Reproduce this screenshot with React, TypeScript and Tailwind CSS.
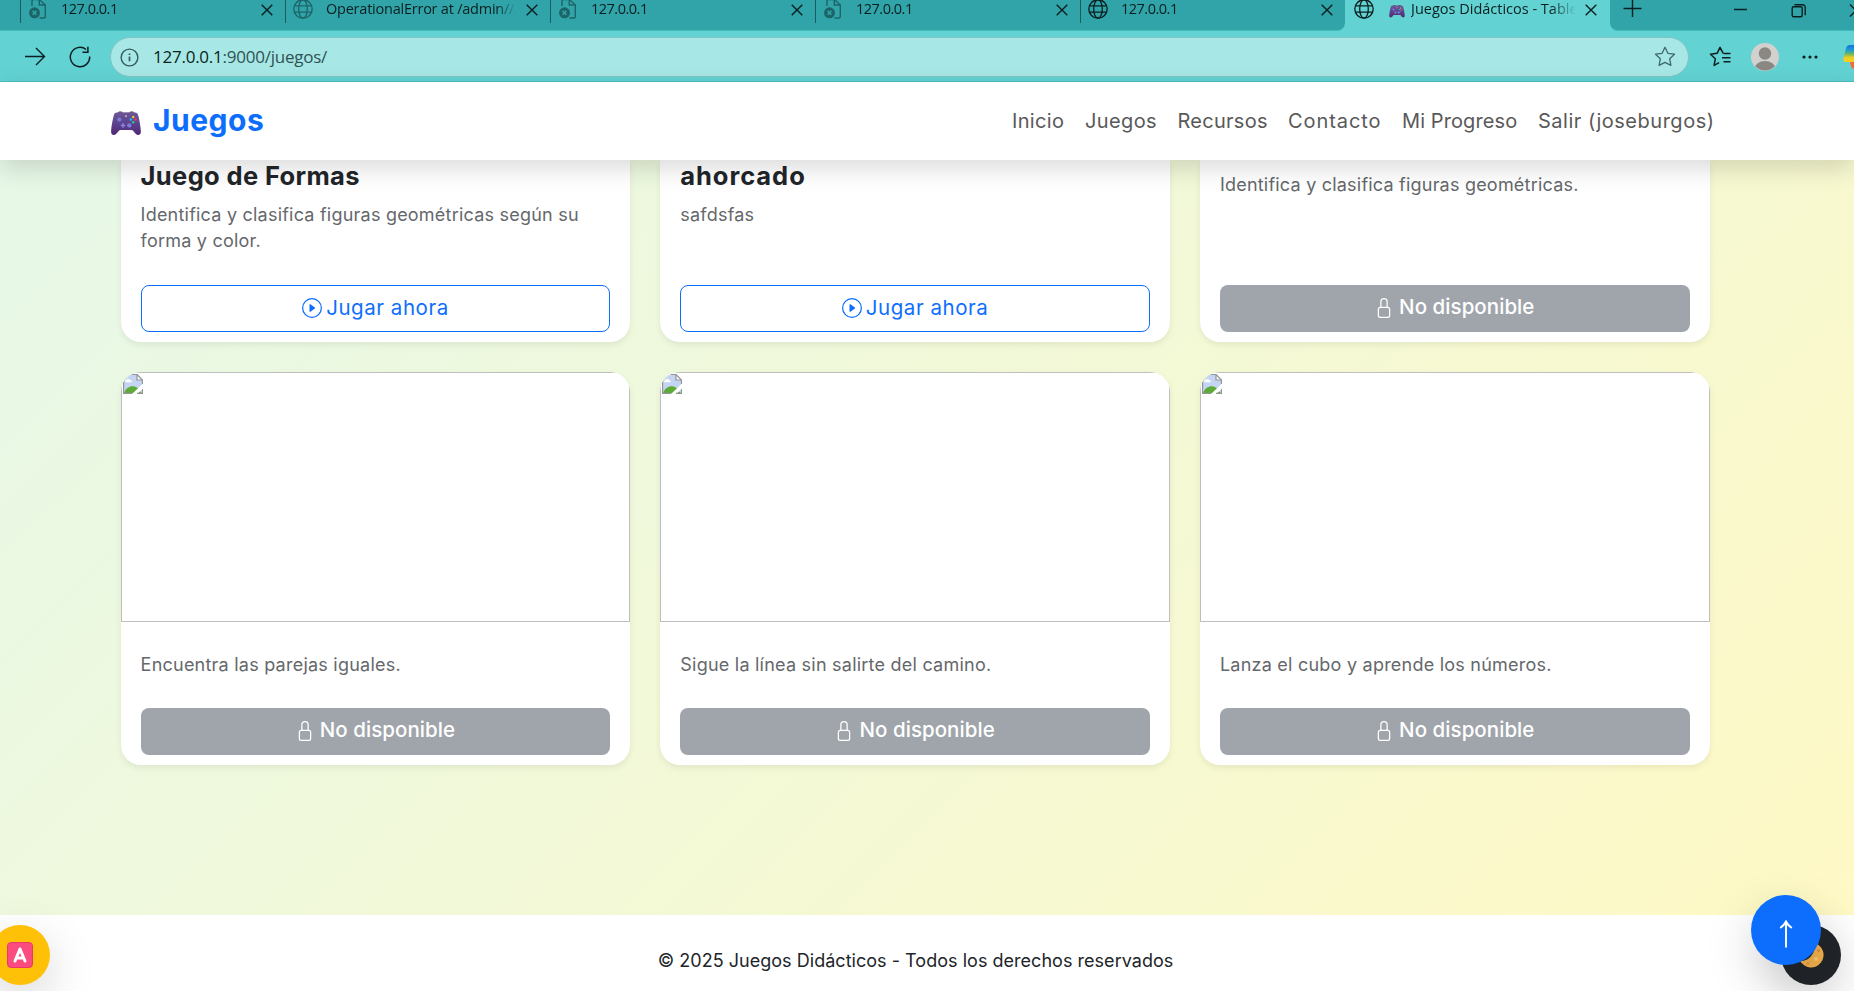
import type { ReactNode } from 'react';
import { BsLock, BsPlayCircle } from 'react-icons/bs';

function GamepadIcon({ className }: { className: string }) {
  return (
    <svg viewBox="0 0 30 25" className={className}>
      <defs>
        <linearGradient id="pad" x1="0" y1="0" x2="0" y2="1">
          <stop offset="0" stopColor="#6a5796" />
          <stop offset="0.45" stopColor="#5d4491" />
          <stop offset="1" stopColor="#512772" />
        </linearGradient>
      </defs>
      <path d="M6.5 1.8C7.2.3 11 .2 11.8 1.4h6.4C19 .2 22.8.3 23.5 1.8z" fill="#4c2a50" />
      <path
        d="M6 1.6h18c1.8 0 2.7 1 3.3 3.2 1.2 4.4 2.4 11.600 2.600 15.600.2 3.500-2.800 4.600-5 2.700-1.400-1.300-2.400-3.600-3.900-4.100H9c-1.500.500-2.500 2.800-3.900 4.100C2.900 25-.1 23.900.1 20.400.3 16.400 1.500 9.200 2.700 4.800 3.300 2.600 4.200 1.600 6 1.600z"
        fill="url(#pad)"
      />
      <circle cx="8.300" cy="8.600" r="2.100" fill="#7d7bd8" />
      <circle cx="18.300" cy="14.400" r="2.200" fill="#7d7bd8" />
      <path d="M9.700 14.400h4.600M12 12.100v4.600" stroke="#8583e0" strokeWidth="1.500" />
      <circle cx="15" cy="5.200" r="1.100" fill="#b9a6b4" />
      <circle cx="22.200" cy="6" r="1.200" fill="#f3c53c" />
      <circle cx="19.800" cy="8.500" r="1.200" fill="#27b5f0" />
      <circle cx="24.700" cy="8.500" r="1.200" fill="#f43e52" />
      <circle cx="22.200" cy="11.200" r="1.200" fill="#26d07c" />
    </svg>
  );
}

function GlobeIcon({ className }: { className: string }) {
  return (
    <svg viewBox="0 0 20 20" className={className} fill="none" stroke="currentColor" strokeWidth="1.300">
      <circle cx="10" cy="10" r="9.200" />
      <ellipse cx="10" cy="10" rx="4.300" ry="9.200" />
      <path d="M1.600 6.800h16.800M1.600 13.200h16.800" />
    </svg>
  );
}

function BrokenPageIcon() {
  return (
    <svg viewBox="0 0 20 20" className="size-5 text-[#1d6468]" fill="none" stroke="currentColor" strokeWidth="1.400">
      <path d="M4 7V2.200C4 1.200 4.600.600 5.600.600h5.800L17.300 6v11.500c0 .900-.600 1.500-1.500 1.500h-4.300" />
      <path d="M11.300.600V6h6" />
      <circle cx="6.500" cy="13.800" r="5.500" fill="currentColor" stroke="none" />
      <path d="M4.600 11.900l3.800 3.800M8.400 11.900l-3.800 3.800" stroke="#30a4a8" strokeWidth="1.500" />
    </svg>
  );
}

function CloseIcon() {
  return (
    <svg viewBox="0 0 12 12" className="size-3 shrink-0" stroke="#0b1f20" strokeWidth="1.400">
      <path d="M.7.7l10.600 10.600M11.300.7L.7 11.300" />
    </svg>
  );
}

function Tab({ icon, title, tracking }: { icon: ReactNode; title: string; tracking: string }) {
  return (
    <div className="flex h-[18px] w-[265px] shrink-0 items-center pl-[7px] pr-[13px]">
      <span className="flex w-5 shrink-0">{icon}</span>
      <span
        className={`ml-[13px] w-[190px] shrink-0 overflow-hidden text-[14.5px] whitespace-nowrap [mask-image:linear-gradient(to_right,black_170px,transparent_190px)] ${tracking}`}
      >
        {title}
      </span>
      <span className="ml-auto mt-px">
        <CloseIcon />
      </span>
    </div>
  );
}

function BrowserChrome() {
  const digits = 'tracking-[-0.5px]';
  return (
    <div className="h-[82px] border-b border-[#4dbcbd] bg-[#62d2d2] font-['Open_Sans',sans-serif] text-[#0b1f20]">
      <div className="flex h-[31px]">
        <div className="flex w-[1345px] shrink-0 rounded-br-lg border-b border-[#45b8ba] bg-[#30a4a8] pl-5">
          <div className="flex h-[23px] border-l border-[#1c5c60]">
            <Tab icon={<BrokenPageIcon />} title="127.0.0.1" tracking={digits} />
          </div>
          <div className="-ml-px flex h-[23px] border-l border-[#1c5c60]">
            <Tab icon={<GlobeIcon className="size-5 text-[#1d6468]" />} title="OperationalError at /admin//A" tracking="tracking-[-0.23px]" />
          </div>
          <div className="-ml-px flex h-[23px] border-l border-[#1c5c60]">
            <Tab icon={<BrokenPageIcon />} title="127.0.0.1" tracking={digits} />
          </div>
          <div className="-ml-px flex h-[23px] border-l border-[#1c5c60]">
            <Tab icon={<BrokenPageIcon />} title="127.0.0.1" tracking={digits} />
          </div>
          <div className="-ml-px flex h-[23px] border-l border-[#1c5c60]">
            <Tab icon={<GlobeIcon className="size-5" />} title="127.0.0.1" tracking={digits} />
          </div>
        </div>
        <div className="flex h-[18px] w-[265px] shrink-0 items-center pl-[9px] pr-[13px]">
          <GlobeIcon className="size-5 shrink-0" />
          <GamepadIcon className="mt-1 ml-[15px] h-[13px] w-4 shrink-0" />
          <span className="ml-[6px] w-[165px] shrink-0 overflow-hidden text-[14.5px] whitespace-nowrap [mask-image:linear-gradient(to_right,black_140px,transparent_165px)]">
            Juegos Didácticos - Table
          </span>
          <span className="ml-auto mt-px">
            <CloseIcon />
          </span>
        </div>
        <div className="flex flex-1 overflow-hidden rounded-bl-lg border-b border-[#45b8ba] bg-[#30a4a8]">
          <svg viewBox="0 0 244 30" className="h-[30px] w-[244px]" fill="none" stroke="#0b1f20" strokeWidth="1.400">
            <path d="M13.500 8.500h18M22.500-1v18" />
            <path d="M124 9.500h13" />
            <path d="M182.700 6.700h7a1.500 1.500 0 0 1 1.500 1.500v7a1.500 1.500 0 0 1-1.500 1.500h-7a1.500 1.500 0 0 1-1.500-1.500v-7a1.500 1.500 0 0 1 1.500-1.500z" transform="translate(1 0)" />
            <path d="M184.500 4.700h8.200a2.500 2.500 0 0 1 2.500 2.500v8" />
            <path d="M240 4.500l12 12M240 16.500l12-12" />
          </svg>
        </div>
      </div>
      <div className="flex h-[50px] items-center overflow-hidden pt-[2px] pl-6">
        <svg viewBox="0 0 22 22" className="size-[22px] shrink-0" fill="none" stroke="#0b1f20" strokeWidth="1.400">
          <path d="M1 10.500h19.500M12 2l8.500 8.500L12 19" />
        </svg>
        <svg viewBox="0 0 22 22" className="ml-[23px] size-[22px] shrink-0" fill="none" stroke="#0b1f20" strokeWidth="1.500">
          <path d="M20.700 10.500a9.700 9.700 0 1 1-3.600-7M18.900.700v5.600h-5.400" />
        </svg>
        <div className="ml-[19px] flex h-10 w-[1579px] shrink-0 items-center rounded-full border border-[#80c4c3] bg-[#a7e7e5] pr-3 pl-[9px]">
          <svg viewBox="0 0 20 20" className="size-[19px]" fill="none" stroke="#375c5d" strokeWidth="1.500">
            <circle cx="10" cy="10" r="8.800" />
            <path d="M10 9v5M10 5.700v1.700" strokeWidth="1.800" />
          </svg>
          <span className="-mt-px ml-[14px] text-[17px] tracking-[-0.24px] text-[#2f5354]">
            <span className="text-[#0b1f20]">127.0.0.1</span>:9000/juegos/
          </span>
          <svg viewBox="0 0 22 22" className="ml-auto size-[22px]" fill="none" stroke="#41696a" strokeWidth="1.300" strokeLinejoin="round">
            <path d="M11 1.300l2.900 6 6.600.900-4.800 4.600 1.200 6.600L11 16.300l-5.900 3.100 1.200-6.600L1.500 8.200l6.600-.900z" />
          </svg>
        </div>
        <svg viewBox="0 0 22 22" className="ml-5 size-[22px] shrink-0" fill="none" stroke="#0b1f20" strokeWidth="1.500" strokeLinejoin="round">
          <path d="M14.200 7.300L11 1.300l-2.900 6-6.600.900 4.800 4.600-1.200 6.600 5-2.700M14.500 7.600h7M13 11.700h8.500M14.500 15.800h7" />
        </svg>
        <svg viewBox="0 0 28 28" className="ml-5 size-7 shrink-0">
          <clipPath id="face">
            <circle cx="14" cy="14" r="13.400" />
          </clipPath>
          <circle cx="14" cy="14" r="14" fill="#d3d1ce" />
          <g fill="#8b8884" clipPath="url(#face)">
            <circle cx="14" cy="10.500" r="6.200" />
            <ellipse cx="14" cy="26" rx="10.500" ry="8" />
          </g>
        </svg>
        <svg viewBox="0 0 18 4" className="ml-[22px] h-1 w-[18px] shrink-0" fill="#0b1f20">
          <circle cx="3" cy="2" r="1.600" />
          <circle cx="9" cy="2" r="1.600" />
          <circle cx="15" cy="2" r="1.600" />
        </svg>
        <svg viewBox="0 0 26 26" className="ml-6 size-[26px] shrink-0">
          <defs>
            <linearGradient id="cop" x1="0" y1="0" x2="0" y2="1">
              <stop offset="0" stopColor="#1673dc" />
              <stop offset="0.300" stopColor="#1c9bd8" />
              <stop offset="0.500" stopColor="#63b56b" />
              <stop offset="0.750" stopColor="#f3cf1f" />
            </linearGradient>
          </defs>
          <path d="M7 1h12v17H3c-3 0-3-3-2.300-5L3 4.500C3.600 2.500 4.600 1 7 1z" fill="url(#cop)" />
          <path d="M7 18h12v7h-8c-2.500 0-3.500-4-4-7z" fill="#ef6a3c" />
        </svg>
      </div>
    </div>
  );
}

function NavBar() {
  return (
    <header className="relative z-10 flex h-[78px] items-center bg-white pr-[138px] pl-[111px] shadow-[0_8px_24px_rgba(0,0,0,0.15)]">
      <GamepadIcon className="mt-[5px] h-[25px] w-[30px]" />
      <span className="-mt-px ml-3 text-[30px] font-bold tracking-[0.5px] text-[#0d6efd]">Juegos</span>
      <nav className="ml-auto flex gap-5 text-[20px] whitespace-nowrap text-[#595959]">
        <a className="w-[53px] tracking-[0.32px]">Inicio</a>
        <a className="w-[72.5px] tracking-[0.38px]">Juegos</a>
        <a className="w-[90.5px] tracking-[0.26px]">Recursos</a>
        <a className="w-[94px] tracking-[0.93px]">Contacto</a>
        <a className="w-[116px] tracking-[0.1px]">Mi Progreso</a>
        <a className="w-[178px] tracking-[0.52px]">Salir (joseburgos)</a>
      </nav>
    </header>
  );
}

function PlayButton() {
  return (
    <button className="mt-auto flex h-[47px] shrink-0 items-center justify-center gap-1 rounded-[8px] border border-[#0d6efd] pb-px text-[20.5px] tracking-[0.55px] text-[#0d6efd]">
      <BsPlayCircle className="size-5" />
      <span>Jugar ahora</span>
    </button>
  );
}

function LockedButton() {
  return (
    <button className="mt-auto flex h-[47px] shrink-0 items-center justify-center gap-[5px] rounded-[8px] bg-[#a0a5ab] pr-px pb-0.5 text-[20.5px] font-medium tracking-[0.05px] text-white">
      <BsLock className="size-5" />
      <span>No disponible</span>
    </button>
  );
}

function BrokenImage() {
  return (
    <div className="h-[250px] border border-[#bfbfbf] pt-px pl-px">
      <svg viewBox="0 0 20 20" className="size-5">
        <path d="M0 0h14l6 6v14H0z" fill="#c3d5f3" />
        <path d="M3 6.500c.500-2 3.800-2.200 4.300-.300 1.600-.300 2.300 1.700.900 2H3c-1.200 0-1.300-1.500 0-1.700z" fill="#fff" />
        <path d="M1 19.500c2.500-8.500 12-9.300 15-3.500l3 3.500z" fill="#5bab36" />
        <path d="M8.500 20.500L20 9.500v5L14 20.500z" fill="#fff" />
        <path d="M14 .500V6h5.500" fill="#fff" stroke="#949494" strokeWidth="1.200" />
        <path d="M9 .500h5l5.500 5.500v4M.600 1v18.400H9M14 19.400h5.500V15" fill="none" stroke="#949494" strokeWidth="1.200" />
      </svg>
    </div>
  );
}

const cardShell = 'flex flex-col bg-white shadow-[0_3px_6px_rgba(0,0,0,0.07)]';

function OpenCard({ title, titleTracking, children }: { title: string; titleTracking: string; children: ReactNode }) {
  return (
    <article className={`${cardShell} rounded-b-[20px] px-5 pt-px pb-[10px]`}>
      <h2 className={`text-[25.5px] leading-[30px] font-bold text-[#212529] ${titleTracking}`}>{title}</h2>
      <p className="mt-[11px] text-[18px] leading-[26px] tracking-[0.22px] text-[#65686b]">{children}</p>
      <PlayButton />
    </article>
  );
}

function PictureCard({ text }: { text: string }) {
  return (
    <article className={`${cardShell} overflow-hidden rounded-[20px]`}>
      <BrokenImage />
      <div className="flex flex-1 flex-col px-5 pt-[30px] pb-[10px]">
        <p className="text-[18px] leading-[26px] tracking-[0.23px] text-[#65686b]">{text}</p>
        <LockedButton />
      </div>
    </article>
  );
}

export default function App() {
  return (
    <div className="relative flex h-[991px] w-[1854px] flex-col overflow-hidden bg-white font-['Inter',sans-serif]">
      <BrowserChrome />
      <div className="flex flex-1 flex-col bg-[linear-gradient(135deg,#e6f8e9,#fff9c4)]">
        <NavBar />
        <main className="flex flex-1 flex-col gap-[30px] pr-[144.4px] pl-[120.6px]">
          <section className="grid h-[182px] grid-cols-3 gap-[30px]">
            <OpenCard title="Juego de Formas" titleTracking="tracking-[0.36px]">
              Identifica y clasifica figuras geométricas según su
              <br />
              forma y color.
            </OpenCard>
            <OpenCard title="ahorcado" titleTracking="tracking-[0.95px]">
              safdsfas
            </OpenCard>
            <article className={`${cardShell} rounded-b-[20px] px-5 pt-3 pb-[10px]`}>
              <p className="text-[18px] leading-[26px] tracking-[0.21px] text-[#65686b]">
                Identifica y clasifica figuras geométricas.
              </p>
              <LockedButton />
            </article>
          </section>
          <section className="grid h-[393px] grid-cols-3 gap-[30px]">
            <PictureCard text="Encuentra las parejas iguales." />
            <PictureCard text="Sigue la línea sin salirte del camino." />
            <PictureCard text="Lanza el cubo y aprende los números." />
          </section>
        </main>
        <footer className="h-[76px] bg-white pt-[33px] pr-[23px] text-center text-[18px] leading-[26px] tracking-[0.03px] text-[#212529]">
          © 2025 Juegos Didácticos - Todos los derechos reservados
        </footer>
      </div>

      <button className="absolute top-[925px] left-[-10px] flex size-[60px] items-center justify-center rounded-full bg-[#ffc107] shadow-[0_16px_48px_rgba(0,0,0,0.17)]">
        <span className="flex size-[26px] items-center justify-center rounded-[4px] border border-[#e93a6b] bg-[#fb4c80]">
          <svg viewBox="0 0 14 16" className="h-4 w-[14px]" fill="none" stroke="#fff" strokeWidth="3" strokeLinecap="round" strokeLinejoin="round">
            <path d="M2 14L7 2l5 12M4 11h6" />
          </svg>
        </span>
      </button>
      <button className="absolute top-[925px] left-[1781px] flex size-[60px] items-center justify-center rounded-full bg-[#212529] shadow-[0_16px_48px_rgba(0,0,0,0.17)]">
        <svg viewBox="0 0 26 26" className="size-[26px]">
          <path d="M16 .800a12.500 12.500 0 1 1-14 18C10 20.500 19 11 16 .800z" fill="#f3b04d" />
          <circle cx="20.500" cy="8.500" r="1.600" fill="#dd9440" />
          <circle cx="18" cy="17" r="1.900" fill="#f9cc72" />
          <circle cx="10" cy="21.500" r="1.500" fill="#e39a43" />
        </svg>
      </button>
      <button className="absolute top-[895px] left-[1751px] flex size-[70px] items-center justify-center rounded-full bg-[#0d6efd] shadow-[0_16px_48px_rgba(0,0,0,0.17)]">
        <svg viewBox="0 0 14 28" className="mt-2 h-7 w-[14px]" fill="none" stroke="#fff" strokeWidth="1.900">
          <path d="M7 27.500V2M1.200 8Q5 5.500 7 1.500 9 5.500 12.800 8" />
        </svg>
      </button>
    </div>
  );
}
